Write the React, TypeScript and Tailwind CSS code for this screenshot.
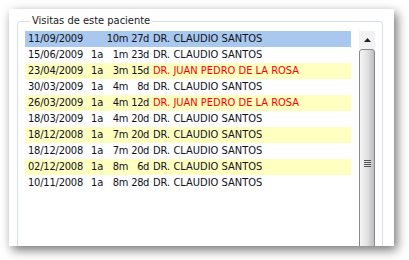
import React from "react";

type Visit = {
  date: string;
  years: string;
  months: string;
  days: string;
  doctor: string;
};

const visits: Visit[] = [
  { date: "11/09/2009", years: "", months: "10m", days: "27d", doctor: "DR. CLAUDIO SANTOS" },
  { date: "15/06/2009", years: "1a", months: "1m", days: "23d", doctor: "DR. CLAUDIO SANTOS" },
  { date: "23/04/2009", years: "1a", months: "3m", days: "15d", doctor: "DR. JUAN PEDRO DE LA ROSA" },
  { date: "30/03/2009", years: "1a", months: "4m", days: "8d", doctor: "DR. CLAUDIO SANTOS" },
  { date: "26/03/2009", years: "1a", months: "4m", days: "12d", doctor: "DR. JUAN PEDRO DE LA ROSA" },
  { date: "18/03/2009", years: "1a", months: "4m", days: "20d", doctor: "DR. CLAUDIO SANTOS" },
  { date: "18/12/2008", years: "1a", months: "7m", days: "20d", doctor: "DR. CLAUDIO SANTOS" },
  { date: "18/12/2008", years: "1a", months: "7m", days: "20d", doctor: "DR. CLAUDIO SANTOS" },
  { date: "02/12/2008", years: "1a", months: "8m", days: "6d", doctor: "DR. CLAUDIO SANTOS" },
  { date: "10/11/2008", years: "1a", months: "8m", days: "28d", doctor: "DR. CLAUDIO SANTOS" },
];

function VisitRow({ visit, index }: { visit: Visit; index: number }) {
  const selected = index === 0;
  const striped = index % 2 === 0;
  const other = visit.doctor.includes("JUAN");

  return (
    <div
      className={`flex h-[16px] items-center whitespace-nowrap pl-[3px] leading-[16px] ${
        selected ? "bg-[#a8c8ee]" : striped ? "bg-[#ffffc0]" : "bg-white"
      }`}
    >
      <span className="w-[63px] tracking-[-0.2px]">{visit.date}</span>
      <span className="w-[12px]">{visit.years}</span>
      <span className="w-[25px] text-right tracking-[-0.3px]">{visit.months}</span>
      <span className="w-[21px] text-right tracking-[-0.4px]">{visit.days}</span>
      <span className={`ml-[4px] ${other ? "text-[#ff0000]" : "text-[#101020]"}`}>
        {visit.doctor}
      </span>
    </div>
  );
}

function ScrollBar() {
  return (
    <div className="flex w-[16px] flex-col">
      <div className="flex h-[18px] items-center justify-center bg-[#f2f2f2]">
        <svg width="7" height="4" viewBox="0 0 7 4">
          <path d="M3.5 0 L7 4 L0 4 Z" fill="#222" />
        </svg>
      </div>
      <div className="flex h-[200px] items-start justify-center rounded-t-[3px] border border-[#8a8a8a] bg-gradient-to-r from-[#f4f4f4] via-[#e2e2e2] to-[#bdbdbd] pt-[110px]">
        <div className="flex flex-col gap-[1px]">
          <div className="h-[1px] w-[7px] bg-[#555]" />
          <div className="h-[1px] w-[7px] bg-[#555]" />
          <div className="h-[1px] w-[7px] bg-[#555]" />
          <div className="h-[1px] w-[7px] bg-[#555]" />
        </div>
      </div>
    </div>
  );
}

export default function App() {
  return (
    <div className="h-[260px] w-[409px] overflow-hidden bg-white pl-[9px] pt-[9px] font-['DejaVu_Sans_Condensed','Liberation_Sans',Arial,sans-serif] text-[11px] text-[#101020]">
      <div className="h-[237px] w-[385px] overflow-hidden bg-white px-[8px] pt-[5px] shadow-[3px_4px_10px_rgba(0,0,0,0.55)]">
        <fieldset className="h-[260px] w-[366px] rounded-[3px] border border-[#d5dfe5] pl-[7px] pr-[6px] pt-[3px]">
          <legend className="ml-[5px] px-[2px] leading-[14px] text-[#1a1a1a]">
            Visitas de este paciente
          </legend>
          <div className="flex gap-[8px]">
            <div className="w-[326px]">
              {visits.map((v, i) => (
                <VisitRow key={i} visit={v} index={i} />
              ))}
            </div>
            <ScrollBar />
          </div>
        </fieldset>
      </div>
    </div>
  );
}
